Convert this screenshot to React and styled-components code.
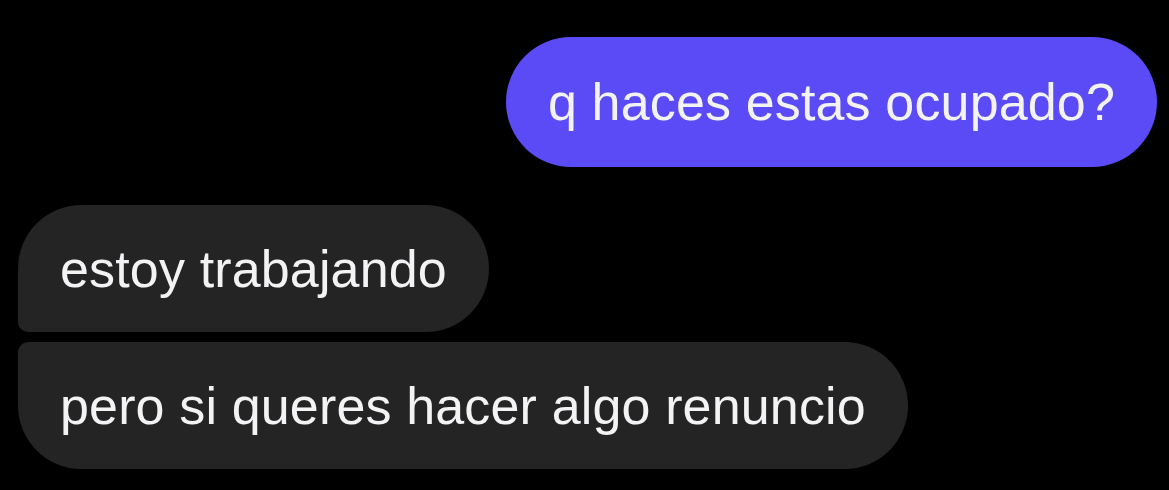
import React from 'react';
import styled, { createGlobalStyle } from 'styled-components';

const GlobalStyle = createGlobalStyle`
  html, body {
    margin: 0;
    padding: 0;
    background: #000;
  }
  body {
    font-family: "Liberation Sans", Arial, sans-serif;
    -webkit-font-smoothing: antialiased;
  }
`;

const Thread = styled.div`
  width: 1169px;
  height: 490px;
  box-sizing: border-box;
  padding: 37px 12px 0 18px;
  display: flex;
  flex-direction: column;
  background: #000;
  overflow: hidden;
`;

const Group = styled.div`
  display: flex;
  flex-direction: column;
  align-items: ${(p) => (p.mine ? 'flex-end' : 'flex-start')};
  gap: 10px;
  margin-top: ${(p) => p.offset || 0}px;
`;

// pill radius, and the tight corner where two bubbles of a group meet
const big = 66;
const small = 11;

const Bubble = styled.div`
  box-sizing: border-box;
  height: ${(p) => (p.mine ? 130 : 127)}px;
  display: flex;
  align-items: center;
  padding: 0 42px 0 42px;
  font-size: 52px;
  letter-spacing: 0.15px;
  color: #f3f3f5;
  white-space: nowrap;
  background: ${(p) => (p.mine ? '#5a4bf6' : '#242424')};
  border-radius: ${(p) =>
    p.mine
      ? `${big}px`
      : `${p.first ? big : small}px ${big}px ${big}px ${p.last ? big : small}px`};
`;

export default function App() {
  return (
    <>
      <GlobalStyle />
      <Thread>
        <Group mine>
          <Bubble mine>q haces estas ocupado?</Bubble>
        </Group>
        <Group offset={38}>
          <Bubble first>estoy trabajando</Bubble>
          <Bubble last>pero si queres hacer algo renuncio</Bubble>
        </Group>
      </Thread>
    </>
  );
}
